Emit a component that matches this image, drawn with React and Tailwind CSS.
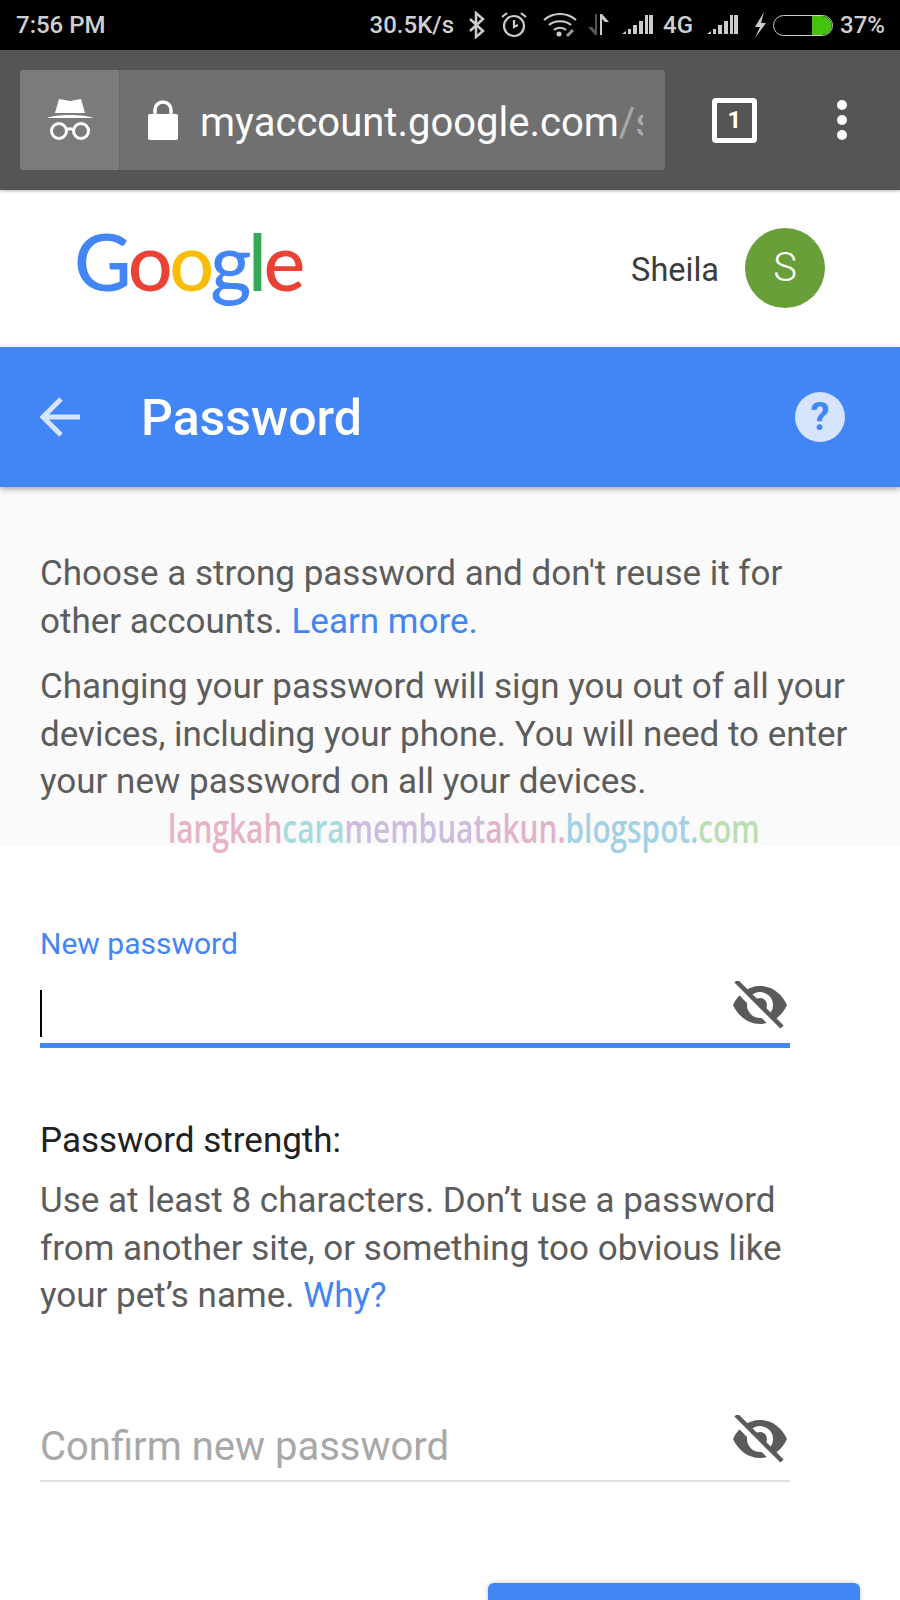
const roboto = 'font-["Roboto",sans-serif]'

function EyeOff() {
  return (
    <svg viewBox="0 0 54 48" className="w-[54px] h-[48px]">
      <path
        fillRule="evenodd"
        fill="#5a5a5a"
        d="M27 5C15 5 5 13 0 24c5 11 15 19 27 19s22-8 27-19C49 13 39 5 27 5zm0 32a13 13 0 1 1 0-26 13 13 0 0 1 0 26z"
      />
      <circle cx="27" cy="24" r="7" fill="#5a5a5a" />
      <path d="M1 3 46 49" stroke="#fff" strokeWidth="8" />
      <path d="M3 0 49 46" stroke="#5a5a5a" strokeWidth="4.500" />
    </svg>
  )
}

function Signal() {
  return (
    <svg viewBox="0 0 32 22" className="w-[32px] h-[22px]" fill="#ccc">
      <path d="M0 20 4 17v3zM6 15h3v5H6zM11 11h4v9h-4zM17 7h4v13h-4zM23 1h8v19h-8z" />
      <path d="M26 1h1v19h-1z" fill="#000" />
    </svg>
  )
}

function StatusBar() {
  return (
    <div className={`h-[50px] bg-black flex items-center justify-between pl-4 pr-[15px] text-[#cfcfcf] text-[24px] font-medium ${roboto}`}>
      <span>7:56 PM</span>
      <div className="flex items-center">
        <span>30.5K/s</span>
        <svg viewBox="0 0 18 28" className="w-[18px] h-[28px] ml-[14px]" fill="none" stroke="#ccc" strokeWidth="2.500">
          <path d="M2 8 15 20 8 26V2l7 6L2 20" />
        </svg>
        <svg viewBox="0 0 28 28" className="w-[28px] h-[28px] ml-[14px]" fill="none" stroke="#ccc" strokeWidth="2.200">
          <circle cx="14" cy="15" r="10" />
          <path d="M14 9v7l4-2M2 6l5-4M26 6l-5-4" />
        </svg>
        <svg viewBox="0 0 34 26" className="w-[34px] h-[26px] ml-[15px]" fill="none" stroke="#ccc" strokeWidth="2.200">
          <path d="M1 8c9-8 23-8 32 0M6 13c6-5 16-5 22 0M11 18c3-3 9-3 12 0" />
          <circle cx="16" cy="22" r="2.500" fill="#ccc" stroke="none" />
          <path d="M24 24l6-6" stroke="#999" strokeWidth="3" />
        </svg>
        <svg viewBox="0 0 22 22" className="w-[22px] h-[22px] ml-[11px]">
          <path d="M9 0v21H7L0 13h4l3 3V0z" fill="#555" />
          <path d="M12 21V0h2l7 8h-4l-3-3v16z" fill="#ccc" />
        </svg>
        <div className="ml-[12px]"><Signal /></div>
        <span className="ml-[9px]">4G</span>
        <div className="ml-[14px]"><Signal /></div>
        <svg viewBox="0 0 16 26" className="w-[16px] h-[26px] ml-[13px]" fill="#ccc">
          <path d="M12 0 3 15h5L3 26l11-15H9z" />
        </svg>
        <div className="w-[60px] h-[21px] ml-[5px] rounded-full border border-[#ccc] flex justify-end overflow-hidden">
          <div className="w-[20px] h-full bg-[#45c10f] rounded-r-full" />
        </div>
        <span className="ml-[7px]">37%</span>
      </div>
    </div>
  )
}

function BrowserBar() {
  return (
    <div className="h-[140px] bg-[#555555] flex items-center pl-5 shadow-[0_1px_3px_rgba(0,0,0,0.3)] relative">
      <div className="w-[645px] h-[100px] rounded-[3px] bg-[#707070] flex overflow-hidden">
        <div className="w-[100px] flex items-center justify-center bg-[#7b7b7b] border-r border-[#666]">
          <svg viewBox="0 0 46 44" className="w-[46px] h-[44px]" fill="#fff">
            <path d="M12 1l11 2 11-2 4 14H8zM0 20c8-4 38-4 46 0z" />
            <g fill="none" stroke="#fff" strokeWidth="3">
              <circle cx="12" cy="33" r="7.500" />
              <circle cx="34" cy="33" r="7.500" />
              <path d="M19 32c3-2 5-2 8 0" />
            </g>
          </svg>
        </div>
        <div className="flex items-center pl-7 min-w-0">
          <svg viewBox="0 0 30 40" className="w-[30px] h-[40px] shrink-0" fill="#fff">
            <path d="M2 14h26a2 2 0 0 1 2 2v22a2 2 0 0 1-2 2H2a2 2 0 0 1-2-2V16a2 2 0 0 1 2-2z" />
            <path d="M7 15V10a8 8 0 0 1 16 0v5" fill="none" stroke="#fff" strokeWidth="3.500" />
          </svg>
          <div className={`ml-[22px] w-[443px] overflow-hidden whitespace-nowrap text-white text-[40px] mt-[5px] ${roboto}`}>
            myaccount.google.com<span className="text-[#aaaaaa]">/s</span>
          </div>
        </div>
      </div>
      <div className="ml-[47px] w-[45px] h-[45px] border-[5px] border-white rounded-[4px] flex items-center justify-center">
        <span className={`text-white text-[24px] font-bold ${roboto}`}>1</span>
      </div>
      <div className="ml-[80px] flex flex-col gap-[5px]">
        <div className="w-[10px] h-[10px] rounded-full bg-white" />
        <div className="w-[10px] h-[10px] rounded-full bg-white" />
        <div className="w-[10px] h-[10px] rounded-full bg-white" />
      </div>
    </div>
  )
}

function GoogleLogo() {
  return (
    <div className='font-["Lato",sans-serif] font-medium text-[79px] leading-none tracking-[-3.500px] whitespace-nowrap'>
      <span className="text-[#4285f4]">G</span>
      <span className="text-[#ea4335]">o</span>
      <span className="text-[#fbbc05]">o</span>
      <span className="text-[#4285f4]">g</span>
      <span className="text-[#34a853]">l</span>
      <span className="text-[#ea4335]">e</span>
    </div>
  )
}

export default function App() {
  return (
    <div className={`w-[900px] h-[1600px] overflow-hidden bg-white relative ${roboto}`}>
      <StatusBar />
      <BrowserBar />

      <div className="h-[157px] flex items-center pl-[74px]">
        <div className="-mt-[16px]"><GoogleLogo /></div>
        <span className="ml-auto text-[32.500px] text-[#3c3c3c] mt-[4px]">Sheila</span>
        <div className="ml-[26px] mr-[75px] w-[80px] h-[80px] rounded-full bg-[#689f38] flex items-center justify-center text-white text-[40px] font-light -mt-[2px]">
          S
        </div>
      </div>

      <div className="h-[140px] bg-[#4285f4] flex items-center pl-10 pr-[55px] shadow-[0_2px_6px_rgba(0,0,0,0.35)] relative">
        <svg viewBox="0 0 40 40" className="w-[40px] h-[40px]" fill="none" stroke="#d6e4fd" strokeWidth="5">
          <path d="M40 20H4M21 2 3 20l18 18" />
        </svg>
        <h1 className="ml-[61px] text-white text-[50px] font-medium mt-[2px]">Password</h1>
        <div className="ml-auto w-[50px] h-[50px] rounded-full bg-[#d6e4fd] flex items-center justify-center text-[#4285f4] text-[38px] font-bold">
          ?
        </div>
      </div>

      <div className="h-[359px] bg-[#fafafa] pl-10 pt-[63px] text-[35px] leading-[47.5px] text-[#5c5c5c]">
        <p>
          Choose a strong password and don't reuse it for
          <br />
          other accounts. <span className="text-[#4285f4]">Learn more.</span>
        </p>
        <p className="mt-[18px]">
          Changing your password will sign you out of all your
          <br />
          devices, including your phone. You will need to enter
          <br />
          your new password on all your devices.
        </p>
      </div>

      {/* blog watermark over the page */}
      <div className='absolute left-[168px] top-[798px] origin-left scale-x-[0.745] font-["Open_Sans",sans-serif] text-[40px] font-semibold whitespace-nowrap leading-[60px]'>
        <span className="text-[#e5b3c5]">langkah</span>
        <span className="text-[#a3dbdf]">cara</span>
        <span className="text-[#cdbcdc]">membuat</span>
        <span className="text-[#dfb3cb]">akun.</span>
        <span className="text-[#a3d0e4]">blogspot.</span>
        <span className="text-[#b9deb4]">com</span>
      </div>

      <div className="pl-10 w-[790px]">
        <div className="mt-[76px] text-[30px] leading-[44px] text-[#4285f4]">New password</div>
        <div className="h-[82px] border-b-[5px] border-[#4285f4] flex items-center justify-between">
          <div className="w-[2px] h-[47px] bg-black self-end mb-[6px]" />
          <div className="mr-[3px]"><EyeOff /></div>
        </div>

        <div className="mt-[69px] text-[35px] leading-[48px] text-[#212121]">Password strength:</div>
        <p className="mt-[12px] text-[35px] leading-[47.5px] text-[#5c5c5c]">
          Use at least 8 characters. Don’t use a password
          <br />
          from another site, or something too obvious like
          <br />
          your pet’s name. <span className="text-[#4285f4]">Why?</span>
        </p>

        <div className="mt-[78px] h-[84px] border-b-2 border-[#e0e0e0] flex items-center justify-between">
          <span className="text-[40px] text-[#a8a8a8] mt-[16px]">Confirm new password</span>
          <div className="mr-[3px]"><EyeOff /></div>
        </div>
      </div>

      <div className="mt-[101px] ml-[488px] w-[372px] h-[60px] bg-[#4285f4] rounded-t-[6px] shadow-[0_0_4px_rgba(0,0,0,0.25)]" />
    </div>
  )
}
